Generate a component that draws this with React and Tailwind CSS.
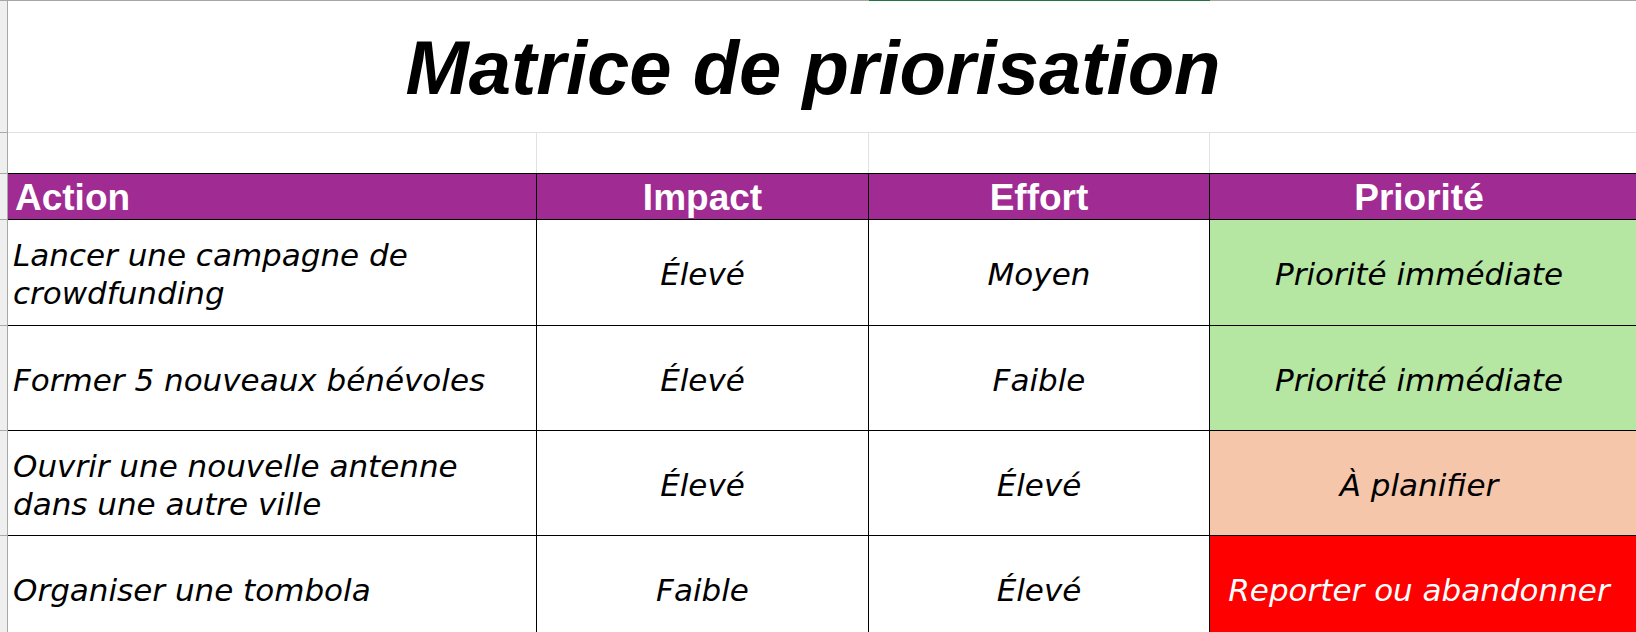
import React from "react";

const rows = [
  { action: ["Lancer une campagne de", "crowdfunding"], impact: "Élevé", effort: "Moyen", priority: "Priorité immédiate", tone: "green", h: "h-[106px]" },
  { action: ["Former 5 nouveaux bénévoles"], impact: "Élevé", effort: "Faible", priority: "Priorité immédiate", tone: "green", h: "h-[105px]" },
  { action: ["Ouvrir une nouvelle antenne", "dans une autre ville"], impact: "Élevé", effort: "Élevé", priority: "À planifier", tone: "peach", h: "h-[105px]" },
  { action: ["Organiser une tombola"], impact: "Faible", effort: "Élevé", priority: "Reporter ou abandonner", tone: "red", h: "h-[105px]" },
];

const toneClass = {
  green: "bg-[#b5e6a2] text-black",
  peach: "bg-[#f6c6ab] text-black",
  red: "bg-[#ff0000] text-white",
};

const cols = "grid grid-cols-[8px_529px_332px_341px_1fr]";
const body = "font-['DejaVu_Sans',sans-serif] italic text-[31px] leading-[38px]";

function App() {
  return (
    <div className="w-[1636px] h-[632px] overflow-hidden bg-white">
      {/* top edge of the sheet */}
      <div className={`${cols} h-px`}>
        <div className="bg-[#a6a6a6]" />
        <div className="bg-[#a6a6a6]" />
        <div className="bg-[#a6a6a6]" />
        <div className="bg-[#217346]" />
        <div className="bg-[#a6a6a6]" />
      </div>

      {/* title */}
      <div className={`${cols} h-[132px]`}>
        <div className="bg-[#efefef] border-r border-b border-[#a8a8a8]" />
        <div className="col-span-4 border-b border-[#e1e1e1] flex items-center justify-center pr-[18px] pt-[3px]">
          <h1 className="font-['Liberation_Sans',Arial,sans-serif] font-bold italic text-[76px] leading-[76px] text-black">
            Matrice de priorisation
          </h1>
        </div>
      </div>

      {/* empty row */}
      <div className={`${cols} h-[40px]`}>
        <div className="bg-[#efefef] border-r border-[#a8a8a8]" />
        <div className="border-r border-[#e1e1e1]" />
        <div className="border-r border-[#e1e1e1]" />
        <div className="border-r border-[#e1e1e1]" />
        <div />
      </div>

      {/* header */}
      <div className={`${cols} h-[47px] font-['Liberation_Sans',Arial,sans-serif] font-bold text-[37px] leading-[43px] text-white`}>
        <div className="bg-[#efefef] border-r border-t border-b border-[#a8a8a8]" />
        <div className="bg-[#a02b93] border-t border-b border-r border-black flex items-center pl-[7px] pt-[2px]">Action</div>
        <div className="bg-[#a02b93] border-t border-b border-r border-black flex items-center justify-center pt-[2px]">Impact</div>
        <div className="bg-[#a02b93] border-t border-b border-r border-black flex items-center justify-center pt-[2px]">Effort</div>
        <div className="bg-[#a02b93] border-t border-b border-black flex items-center justify-center pt-[2px] pr-[8px]">Priorité</div>
      </div>

      {rows.map((r, i) => (
        <div key={i} className={`${cols} ${r.h} ${body}`}>
          <div className="bg-[#efefef] border-r border-b border-[#a8a8a8]" />
          <div className="border-b border-r border-black flex flex-col justify-center pl-[5px] pt-[3px] text-black">
            {r.action.map((line) => (
              <span key={line}>{line}</span>
            ))}
          </div>
          <div className="border-b border-r border-black flex items-center justify-center pt-[3px] text-black">{r.impact}</div>
          <div className="border-b border-r border-black flex items-center justify-center pt-[3px] text-black">{r.effort}</div>
          <div className={`border-b border-black flex items-center justify-center pt-[3px] pr-[8px] ${toneClass[r.tone]}`}>
            {r.priority}
          </div>
        </div>
      ))}
    </div>
  );
}

export default App;
